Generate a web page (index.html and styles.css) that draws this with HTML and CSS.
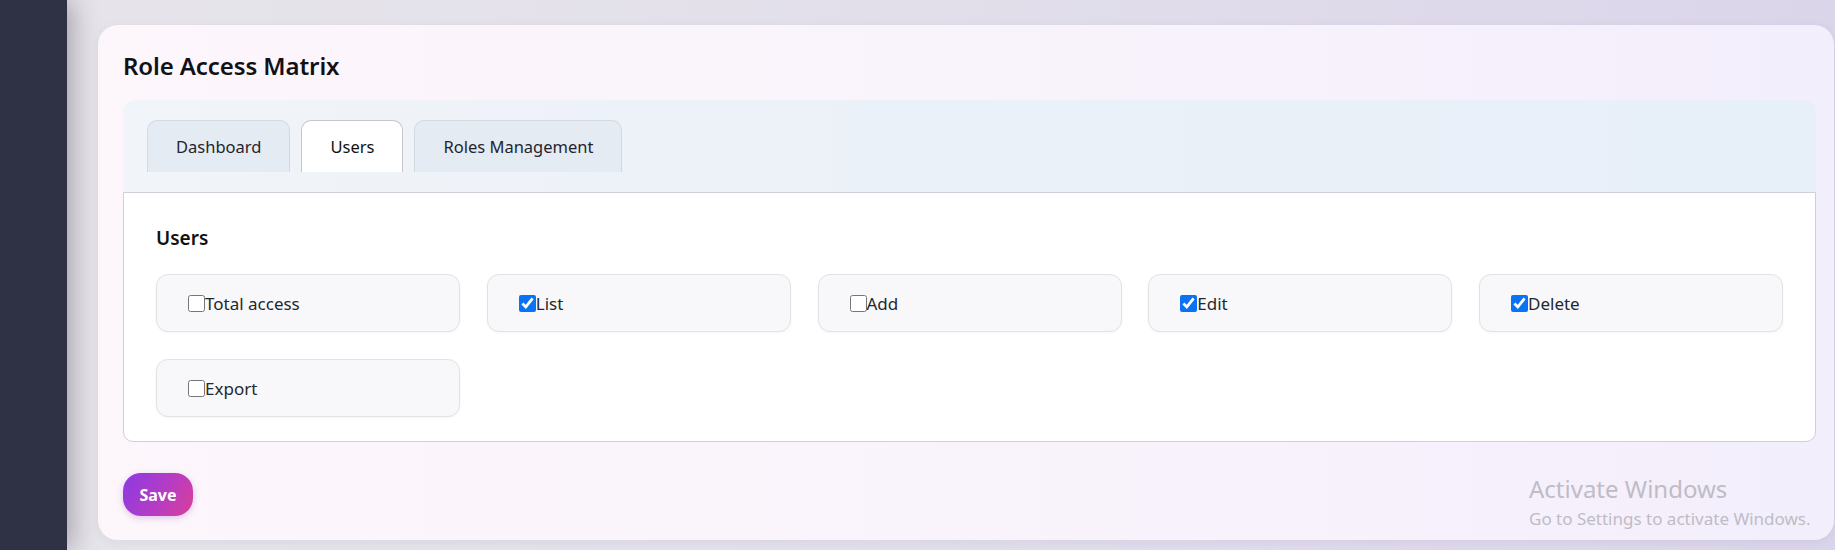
FILE: index.html
```html
<!DOCTYPE html>
<html lang="en">
<head>
<meta charset="utf-8">
<title>Role Access Matrix</title>
<link rel="stylesheet" href="styles.css">
</head>
<body>
<div class="layout">
  <aside class="sidebar"></aside>
  <main class="main">
    <section class="card">
      <h1 class="title">Role Access Matrix</h1>
      <div class="tabs-wrap">
        <div class="tabs">
          <button class="tab">Dashboard</button>
          <button class="tab active">Users</button>
          <button class="tab">Roles Management</button>
        </div>
        <div class="panel">
          <h2 class="panel-title">Users</h2>
          <div class="perm-grid">
            <label class="perm"><input type="checkbox">Total access</label>
            <label class="perm"><input type="checkbox" checked>List</label>
            <label class="perm"><input type="checkbox">Add</label>
            <label class="perm"><input type="checkbox" checked>Edit</label>
            <label class="perm"><input type="checkbox" checked>Delete</label>
            <label class="perm"><input type="checkbox">Export</label>
          </div>
        </div>
      </div>
      <div class="actions">
        <button class="save">Save</button>
      </div>
    </section>
  </main>
</div>
<div class="watermark">
  <div class="wm-title">Activate Windows</div>
  <div class="wm-sub">Go to Settings to activate Windows.</div>
</div>
</body>
</html>
```
FILE: styles.css
```css
* { box-sizing: border-box; }
html, body { margin: 0; padding: 0; }
body {
  width: 1835px;
  height: 550px;
  overflow: hidden;
  font-family: "Noto Sans", "Open Sans", sans-serif;
  color: #1b1b1f;
  background: linear-gradient(90deg, #e7e5ea 0%, #e2dfea 50%, #dbd5ea 100%);
}
.layout {
  display: flex;
  height: 550px;
}
.sidebar {
  width: 67px;
  flex: none;
  background: #2f3145;
  box-shadow: 4px 0 28px rgba(20, 20, 30, 0.35);
  position: relative;
  z-index: 1;
}
.main {
  flex: 1;
  padding: 25px 1px 10px 31px;
}
.card {
  height: 515px;
  border-radius: 20px;
  background: linear-gradient(90deg, #fdf6fb 0%, #f9f4fb 50%, #f3eefb 100%);
  box-shadow: 0 2px 10px rgba(80, 60, 110, 0.08);
  padding: 26px 18px 24px 25px;
  display: flex;
  flex-direction: column;
}
.title {
  margin: 0 0 19px 0;
  font-size: 24px;
  font-weight: 600;
  line-height: 30px;
  color: #111118;
  letter-spacing: -0.1px;
}
.tabs-wrap {
  border-radius: 12px 12px 10px 10px;
  background: linear-gradient(90deg, #f1f4f8 0%, #ebf1f8 50%, #e7eff8 100%);
}
.tabs {
  display: flex;
  gap: 11px;
  padding: 20px 24px 20px 24px;
}
.tab {
  height: 52px;
  padding: 0 28px;
  font-family: inherit;
  font-size: 16.5px;
  color: #1f2530;
  background: #e5ebf2;
  border: 1px solid #d3d9e0;
  border-bottom: none;
  border-radius: 10px 10px 0 0;
}
.tab.active {
  background: #ffffff;
  border-color: #c3c6cc;
  color: #111;
}
.panel {
  background: #ffffff;
  border: 1px solid #cdd1d7;
  border-radius: 0 0 10px 10px;
  padding: 32px 32px 24px 32px;
}
.panel-title {
  margin: 0 0 23px 0;
  font-size: 19px;
  font-weight: 600;
  line-height: 26px;
  color: #111;
}
.perm-grid {
  display: grid;
  grid-template-columns: repeat(5, 304px);
  column-gap: 26.75px;
  row-gap: 27px;
}
.perm {
  height: 58px;
  display: flex;
  align-items: center;
  padding-left: 31px;
  background: #f8f8fa;
  border: 1px solid #e1e2e6;
  border-radius: 12px;
  box-shadow: 0 1px 3px rgba(0, 0, 0, 0.04);
  font-size: 17px;
  color: #25272c;
}
.perm input {
  width: 17px;
  height: 17px;
  margin: 0;
  accent-color: #0a73f5;
}
.actions {
  margin-top: 31px;
}
.save {
  width: 70px;
  height: 43px;
  border: none;
  border-radius: 18px;
  background: linear-gradient(120deg, #8b3ae3 0%, #b53cc4 55%, #da3f98 100%);
  color: #fff;
  font-family: inherit;
  font-size: 16px;
  font-weight: 700;
  box-shadow: 0 2px 6px rgba(140, 50, 180, 0.25);
}
.watermark {
  position: absolute;
  left: 1529px;
  top: 474px;
  color: #bfbcc6;
  font-family: "Noto Sans", "Open Sans", sans-serif;
}
.wm-title {
  font-size: 24px;
  line-height: 30px;
}
.wm-sub {
  font-size: 17px;
  line-height: 24px;
  margin-top: 3px;
}
```
